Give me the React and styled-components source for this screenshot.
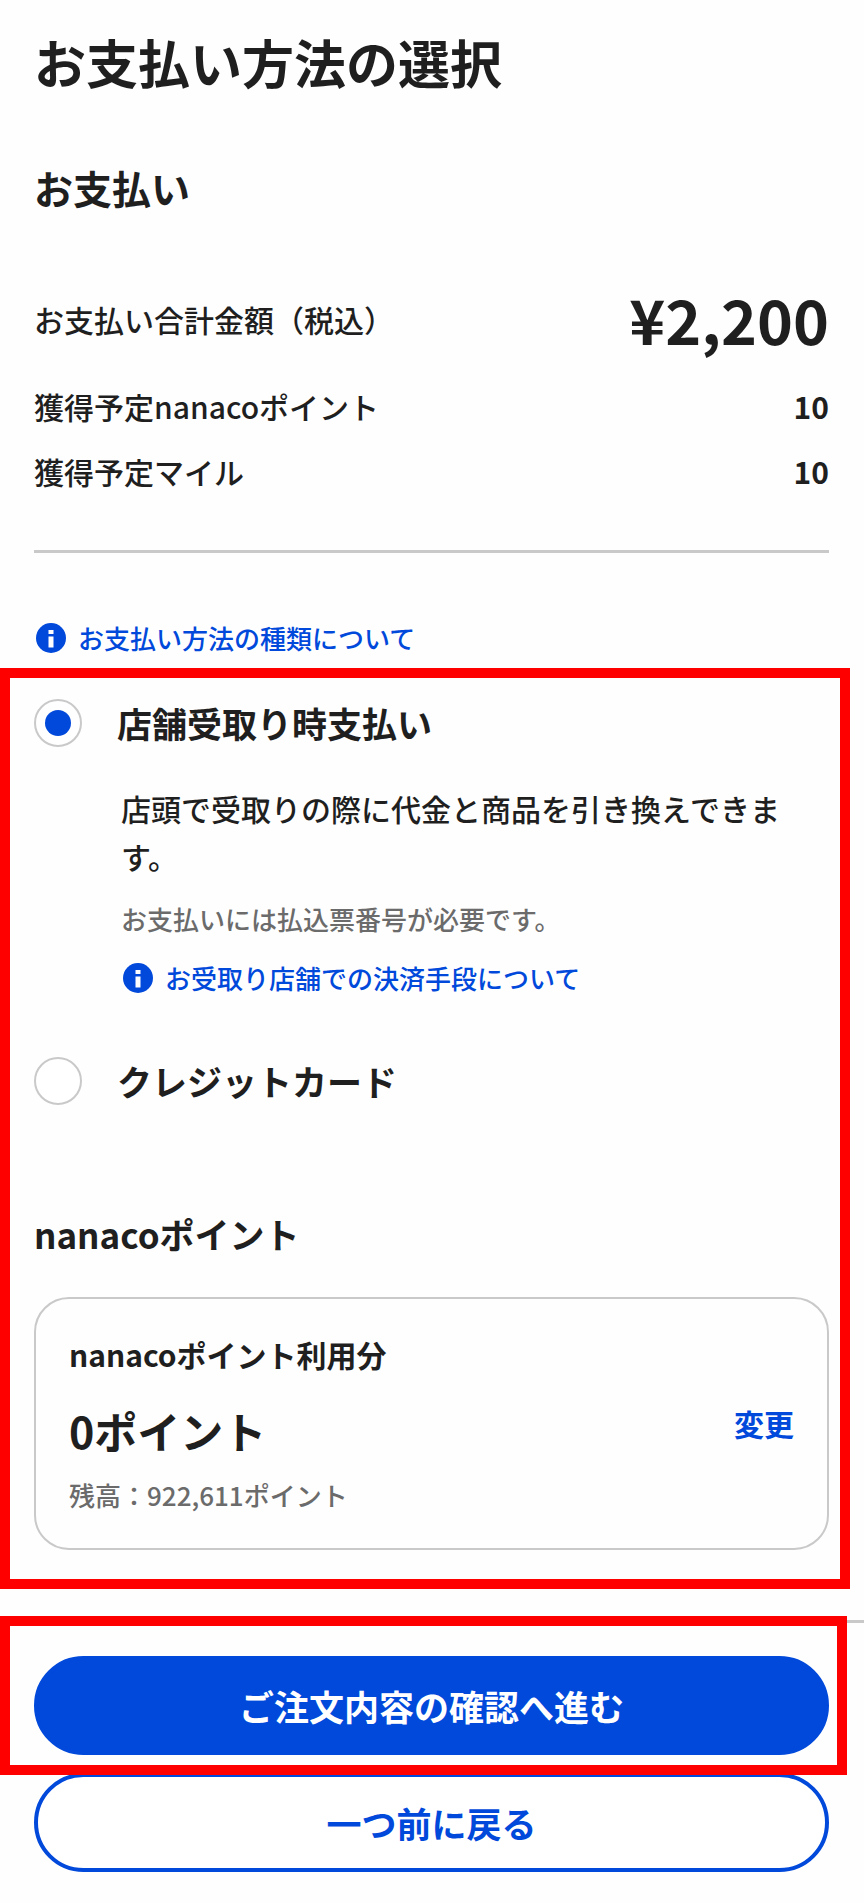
import React, { useState } from "react";
import styled, { createGlobalStyle } from "styled-components";

const GlobalStyle = createGlobalStyle`
  * {
    box-sizing: border-box;
  }

  body {
    margin: 0;
    background-color: #fefefe;
    color: #1f1f1f;
    font-family: "Noto Sans CJK JP", sans-serif;
    font-size: 30px;
    font-weight: 500;
    line-height: 48px;
  }
`;

const Page = styled.main`
  padding-top: 32px;
`;

const Summary = styled.section`
  padding: 0 35px 0 34px;
`;

const PageTitle = styled.h1`
  margin: 0 0 71px;
  font-size: 52px;
  font-weight: 700;
  line-height: 60px;
`;

const SectionTitle = styled.h2`
  margin: 0 0 72px;
  font-size: 39px;
  font-weight: 700;
  line-height: 48px;
`;

const SummaryList = styled.dl`
  display: flex;
  flex-direction: column;
  gap: 17px;
  margin: 0;
  padding-bottom: 55px;
  border-bottom: 3px solid #c9c9c9;
`;

const SummaryRow = styled.div`
  display: flex;
  align-items: center;
  justify-content: space-between;
  margin-bottom: ${({ $total }) => ($total ? "10px" : "0")};
`;

const SummaryLabel = styled.dt``;

const SummaryValue = styled.dd`
  margin: 0;
  font-size: ${({ $total }) => ($total ? "61px" : "30px")};
  font-weight: 700;
  line-height: ${({ $total }) => ($total ? "72px" : "48px")};
`;

const HelpLink = styled.a`
  display: flex;
  align-items: center;
  gap: 12px;
  margin-top: ${({ $top }) => $top};
  padding-left: 2px;
  color: #0049db;
  font-size: 26px;
  line-height: 40px;
  text-decoration: none;
`;

const InfoSvg = styled.svg`
  flex: none;
  width: 30px;
  height: 30px;
`;

const PaymentSection = styled.section`
  position: relative;
  padding: 40px 35px 0 34px;
`;

/* 赤枠の注釈。内容の上に重ねて表示する */
const Highlight = styled.div`
  position: absolute;
  inset: ${({ $inset }) => $inset};
  border: 10px solid #ff0000;
  pointer-events: none;
`;

const Methods = styled.fieldset`
  margin: 0;
  padding: 0;
  border: none;
`;

const MethodLabel = styled.label`
  display: flex;
  align-items: center;
  gap: 35px;
  font-size: 35px;
  font-weight: 700;
  line-height: 50px;
`;

const Radio = styled.input`
  flex: none;
  appearance: none;
  display: grid;
  place-items: center;
  width: 48px;
  height: 48px;
  margin: 0;
  border: 2px solid #c9c9c9;
  border-radius: 50%;
  background-color: #ffffff;

  &:checked::before {
    content: "";
    width: 26px;
    height: 26px;
    border-radius: 50%;
    background-color: #0049db;
  }
`;

const MethodDetail = styled.div`
  padding: 36px 0 58px 87px;
`;

const MethodText = styled.p`
  margin: 0;
`;

const Note = styled.p`
  margin: ${({ $top }) => $top} 0 0;
  color: #6b6b6b;
  font-size: 26px;
  line-height: 40px;
`;

const PointTitle = styled.h3`
  margin: 104px 0 39px;
  font-size: 35px;
  font-weight: 700;
  line-height: 48px;
`;

const PointCard = styled.div`
  display: flex;
  align-items: center;
  justify-content: space-between;
  padding: 31px 33px 33px;
  border: 2px solid #c9c9c9;
  border-radius: 35px;
`;

const PointLabel = styled.h4`
  margin: 0;
  font-size: 30px;
  font-weight: 700;
`;

const PointValue = styled.p`
  margin: 24px 0 0;
  font-size: 43px;
  font-weight: 700;
  line-height: 56px;
`;

const ChangeButton = styled.button`
  padding: 0;
  border: none;
  background: none;
  color: #0049db;
  font: inherit;
  font-weight: 700;
`;

const Footer = styled.footer`
  position: relative;
  display: flex;
  flex-direction: column;
  gap: 18px;
  margin-top: 70px;
  padding: 33px 35px 31px 34px;
  border-top: 3px solid #c9c9c9;
`;

const FooterButton = styled.button`
  height: 99px;
  padding: 0;
  border: 4px solid #0049db;
  border-radius: 50px;
  background-color: ${({ $primary }) => ($primary ? "#0049db" : "#ffffff")};
  color: ${({ $primary }) => ($primary ? "#ffffff" : "#0049db")};
  font: inherit;
  font-size: 35px;
  font-weight: 700;
`;

function InfoIcon() {
  return (
    <InfoSvg viewBox="0 0 30 30" aria-hidden="true">
      <circle cx="15" cy="15" r="15" fill="#0049db" />
      <path d="M12.5 7h5v4h-5zM12.5 13.5h5v11h-5z" fill="#ffffff" />
    </InfoSvg>
  );
}

function App() {
  const [method, setMethod] = useState("store");

  return (
    <>
      <GlobalStyle />
      <Page>
        <Summary>
          <PageTitle>お支払い方法の選択</PageTitle>
          <SectionTitle>お支払い</SectionTitle>
          <SummaryList>
            <SummaryRow $total>
              <SummaryLabel>お支払い合計金額（税込）</SummaryLabel>
              <SummaryValue $total>¥2,200</SummaryValue>
            </SummaryRow>
            <SummaryRow>
              <SummaryLabel>獲得予定nanacoポイント</SummaryLabel>
              <SummaryValue>10</SummaryValue>
            </SummaryRow>
            <SummaryRow>
              <SummaryLabel>獲得予定マイル</SummaryLabel>
              <SummaryValue>10</SummaryValue>
            </SummaryRow>
          </SummaryList>
          <HelpLink href="#methods" $top="65px">
            <InfoIcon />
            お支払い方法の種類について
          </HelpLink>
        </Summary>

        <PaymentSection>
          <Methods id="methods" aria-label="お支払い方法">
            <MethodLabel>
              <Radio
                type="radio"
                name="method"
                checked={method === "store"}
                onChange={() => setMethod("store")}
              />
              店舗受取り時支払い
            </MethodLabel>
            <MethodDetail>
              <MethodText>
                店頭で受取りの際に代金と商品を引き換えできます。
              </MethodText>
              <Note $top="19px">お支払いには払込票番号が必要です。</Note>
              <HelpLink href="#store" $top="19px">
                <InfoIcon />
                お受取り店舗での決済手段について
              </HelpLink>
            </MethodDetail>
            <MethodLabel>
              <Radio
                type="radio"
                name="method"
                checked={method === "card"}
                onChange={() => setMethod("card")}
              />
              クレジットカード
            </MethodLabel>
          </Methods>

          <PointTitle>nanacoポイント</PointTitle>
          <PointCard>
            <div>
              <PointLabel>nanacoポイント利用分</PointLabel>
              <PointValue>0ポイント</PointValue>
              <Note $top="17px">残高：922,611ポイント</Note>
            </div>
            <ChangeButton type="button">変更</ChangeButton>
          </PointCard>
          <Highlight $inset="10px 14px -39px 0" />
        </PaymentSection>

        <Footer>
          <FooterButton type="button" $primary>
            ご注文内容の確認へ進む
          </FooterButton>
          <FooterButton type="button">一つ前に戻る</FooterButton>
          <Highlight $inset="-7px 17px 128px 0" />
        </Footer>
      </Page>
    </>
  );
}

export default App;
